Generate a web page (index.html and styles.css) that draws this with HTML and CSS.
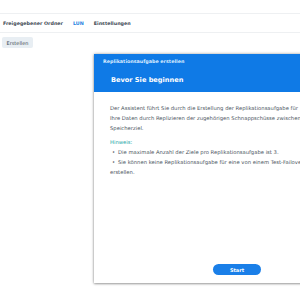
FILE: index.html
```html
<!DOCTYPE html>
<html lang="de">
<head>
    <meta charset="UTF-8">
    <title>Replikation</title>
    <link rel="stylesheet" href="styles.css">
</head>
<body>
    <!-- Tabs oben -->
    <div class="top-bar"></div>
    <div class="tabs">
        <span class="tab">Freigegebener Ordner</span>
        <span class="tab active">LUN</span>
        <span class="tab">Einstellungen</span>
    </div>
    <div class="toolbar">
        <button class="btn-erstellen">Erstellen</button>
    </div>

    <!-- Assistent -->
    <div class="dialog">
        <div class="dialog-header">
            <div class="dialog-title">Replikationsaufgabe erstellen</div>
            <div class="dialog-heading">Bevor Sie beginnen</div>
        </div>
        <div class="dialog-body">
            <p class="intro">Der Assistent führt Sie durch die Erstellung der Replikationsaufgabe für<br>Ihre Daten durch Replizieren der zugehörigen Schnappschüsse zwischen<br>Speicherziel.</p>
            <p class="hinweis">Hinweis:</p>
            <ul class="notes">
                <li>Die maximale Anzahl der Ziele pro Replikationsaufgabe ist 3.</li>
                <li>Sie können keine Replikationsaufgabe für eine von einem Test-Failover<br>erstellen.</li>
            </ul>
        </div>
        <div class="dialog-footer">
            <button class="btn-start">Start</button>
        </div>
    </div>
</body>
</html>
```

FILE: styles.css
```css
body {
    margin: 0;
    width: 300px;
    height: 300px;
    overflow: hidden;
    background: #fff;
    font-family: "DejaVu Sans", Verdana, sans-serif;
    color: #414b55;
}

.top-bar {
    height: 13px;
    border-bottom: 1px solid #eef0f2;
}

.tabs {
    display: flex;
    gap: 10px;
    height: 18px;
    align-items: center;
    padding-left: 3px;
    border-bottom: 1px solid #eef0f2;
    font-size: 4.8px;
    font-weight: bold;
}

.tab.active {
    color: #1a7fe0;
}

.toolbar {
    display: flex;
    padding: 4px 2px;
}

.btn-erstellen {
    font-family: inherit;
    font-size: 5px;
    color: #414b55;
    background: #e8eef3;
    border: none;
    border-radius: 2px;
    height: 11px;
    width: 31px;
    padding: 0;
}

.dialog {
    position: absolute;
    left: 94px;
    top: 54px;
    width: 260px;
    height: 229px;
    background: #fff;
    box-shadow: 0 0 3px rgba(0, 0, 0, 0.35), 0 1px 2px rgba(0, 0, 0, 0.25);
    display: flex;
    flex-direction: column;
}

.dialog-header {
    background: #0f7ae6;
    color: #fff;
    height: 38px;
    padding-left: 9px;
}

.dialog-title {
    font-size: 4.8px;
    font-weight: bold;
    padding-top: 5px;
    color: #d8eaff;
}

.dialog-heading {
    font-size: 6.6px;
    font-weight: bold;
    padding-top: 12px;
    padding-left: 8px;
}

.dialog-body {
    flex: 1;
    padding: 11px 0 0 16px;
    font-size: 5.25px;
    line-height: 10px;
    white-space: nowrap;
    color: #4a545e;
}

.dialog-body p {
    margin: 0;
}

.intro {
    margin-bottom: 4px !important;
}

.hinweis {
    color: #1aa6a6;
}

.notes {
    margin: 0;
    padding: 0;
    list-style: none;
}

.notes li::before {
    content: "•";
    display: inline-block;
    width: 6px;
    margin-left: 2px;
    color: #4a545e;
}

.dialog-footer {
    display: flex;
    align-items: flex-start;
    height: 19px;
    padding-left: 119px;
}

.btn-start {
    font-family: inherit;
    font-size: 5px;
    font-weight: bold;
    color: #fff;
    background: #1a7fe8;
    border: none;
    border-radius: 6px;
    width: 48px;
    height: 11px;
    padding: 0;
}
```
